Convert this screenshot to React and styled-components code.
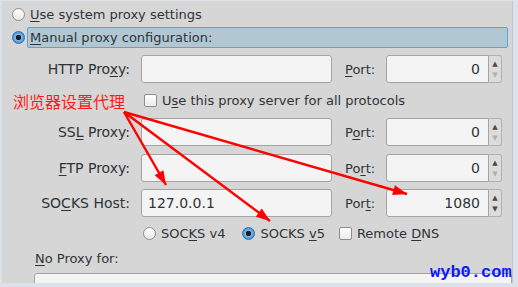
import styled, { createGlobalStyle } from "styled-components";

const Global = createGlobalStyle`
	body {
		margin: 0;
		background: #dde2ea;
		font-family: "DejaVu Sans", "Noto Sans CJK SC", sans-serif;
		font-size: 13px;
		color: #2e3436;
	}
`;

const Page = styled.div`
	position: relative;
	width: 518px;
	height: 287px;
	overflow: hidden;
`;

const Panel = styled.div`
	margin: 1px 5px 0 2px;
	height: 282px;
	background: #d6d6d6;
	border-right: 1px solid #c4c4c4;
	padding: 4px 0 0 0;
	box-sizing: border-box;
	overflow: hidden;
`;

const RadioRow = styled.div`
	display: flex;
	align-items: center;
	gap: 5px;
	height: ${(p) => p.h || 22}px;
	margin-left: 10px;
	margin-bottom: ${(p) => p.mb || 0}px;
`;

const Highlight = styled.div`
	display: flex;
	align-items: center;
	height: 19px;
	width: 477px;
	margin-left: -3px;
	padding-left: 2px;
	background: #b3c7d3;
	border: 1px solid #57a3da;
	border-radius: 2px;
`;

const Radio = styled.span`
	display: inline-block;
	flex: none;
	width: 13px;
	height: 13px;
	border-radius: 50%;
	box-sizing: border-box;
	border: 1px solid ${(p) => (p.on ? "#2c6fae" : "#8d8d8d")};
	background: ${(p) =>
		p.on
			? "radial-gradient(circle, #1b1b1b 0 2.5px, #7cb6e8 3px, #3e8fd6 6px)"
			: "linear-gradient(#ffffff, #e8e8e8)"};
`;

const Check = styled.span`
	display: inline-block;
	flex: none;
	width: 13px;
	height: 13px;
	box-sizing: border-box;
	border: 1px solid #8d8d8d;
	border-radius: 2px;
	background: linear-gradient(#ffffff, #ececec);
`;

const U = styled.span`
	text-decoration: underline;
	text-underline-offset: 2px;
`;

const Grid = styled.div`
	display: grid;
	grid-template-columns: 122px 191px 32px 116px;
	column-gap: 11px;
	margin-left: 6px;
`;

const Label = styled.div`
	display: flex;
	align-items: center;
	justify-content: ${(p) => (p.left ? "flex-start" : "flex-end")};
	height: 28px;
	margin: ${(p) => p.m || "0"};
	padding-left: ${(p) => (p.left ? 2 : 0)}px;
	font-size: ${(p) => (p.left ? 13 : 14)}px;
	white-space: pre;
`;

const Input = styled.div`
	display: flex;
	align-items: center;
	height: 28px;
	box-sizing: border-box;
	padding: 0 6px;
	background: #f4f4f4;
	border: 1px solid #a4a4a4;
	border-radius: 3px;
	font-size: 14px;
	margin: ${(p) => p.m || "0"};
`;

const Spin = styled.div`
	display: flex;
	height: 28px;
	margin: ${(p) => p.m || "0"};
	width: 116px;
`;

const SpinField = styled.div`
	flex: 1;
	display: flex;
	align-items: center;
	justify-content: flex-end;
	padding-right: 8px;
	box-sizing: border-box;
	background: #f4f4f4;
	border: 1px solid #a4a4a4;
	border-radius: 3px 0 0 3px;
	font-size: 14px;
`;

const SpinButtons = styled.div`
	width: 12px;
	display: flex;
	flex-direction: column;
	align-items: center;
	justify-content: center;
	gap: 3px;
	background: #dcdcdc;
	border: 1px solid #b0b0b0;
	border-left: none;
	border-radius: 0 3px 3px 0;
	font-size: 7px;
	line-height: 8px;
`;

const Arrow = styled.span`
	color: ${(p) => (p.dim ? "#b0b0b0" : "#4a4a4a")};
`;

const OptionsRow = styled.div`
	display: flex;
	align-items: center;
	height: ${(p) => p.h}px;
	margin-left: ${(p) => p.ml}px;
	gap: 5px;
`;

const Option = styled.span`
	display: inline-flex;
	align-items: center;
	gap: 5px;
	margin-right: ${(p) => p.mr || 0}px;
`;

const NoProxy = styled.div`
	margin: 1px 0 0 33px;
	height: 18px;
	line-height: 18px;
`;

const TextArea = styled.div`
	margin: 5px 0 0 32px;
	width: 476px;
	height: 30px;
	background: #f4f4f4;
	border: 1px solid #a4a4a4;
	border-radius: 3px;
`;

const Note = styled.div`
	position: absolute;
	left: 13px;
	top: 91px;
	color: #ff1a1a;
	font-family: "Noto Sans CJK SC", sans-serif;
	font-size: 16px;
	line-height: 20px;
`;

const Mark = styled.div`
	position: absolute;
	left: 430px;
	top: 263px;
	color: #0a1aff;
	font-family: "Liberation Mono", monospace;
	font-weight: bold;
	font-size: 17px;
	line-height: 20px;
`;

const Overlay = styled.svg`
	position: absolute;
	left: 0;
	top: 0;
	pointer-events: none;
`;

function head(x1, y1, x2, y2, len = 14, w = 5) {
	const dx = x2 - x1;
	const dy = y2 - y1;
	const d = Math.hypot(dx, dy);
	const ux = dx / d;
	const uy = dy / d;
	const bx = x2 - ux * len;
	const by = y2 - uy * len;
	return `${x2},${y2} ${bx - uy * w},${by + ux * w} ${bx + uy * w},${by - ux * w}`;
}

const arrows = [
	[124, 112, 166, 185],
	[124, 112, 270, 221],
	[124, 112, 407, 194],
];

function PortBox({ value, m, dimDown }) {
	return (
		<Spin m={m}>
			<SpinField>{value}</SpinField>
			<SpinButtons>
				<Arrow>▲</Arrow>
				<Arrow dim={dimDown}>▼</Arrow>
			</SpinButtons>
		</Spin>
	);
}

function ProxyRow({ label, port, value, portValue, m, dimDown }) {
	return (
		<>
			<Label m={m}>
				<span>{label}</span>
			</Label>
			<Input m={m}>{value}</Input>
			<Label left m={m}>
				<span>{port}</span>
			</Label>
			<PortBox value={portValue} m={m} dimDown={dimDown} />
		</>
	);
}

export default function App() {
	return (
		<Page>
			<Global />
			<Panel>
				<RadioRow h={18} mb={3}>
					<Radio />
					<span>
						<U>U</U>se system proxy settings
					</span>
				</RadioRow>
				<RadioRow h={22} mb={7}>
					<Radio on />
					<Highlight>
						<span>
							<U>M</U>anual proxy configuration:
						</span>
					</Highlight>
				</RadioRow>
				<Grid>
					<ProxyRow
						label={<>HTTP Pro<U>x</U>y:</>}
						port={<><U>P</U>ort:</>}
						portValue="0"
						dimDown
					/>
				</Grid>
				<OptionsRow h={35} ml={142}>
					<Check />
					<span>
						U<U>s</U>e this proxy server for all protocols
					</span>
				</OptionsRow>
				<Grid>
					<ProxyRow
						label={<>SS<U>L</U> Proxy:</>}
						port={<>P<U>o</U>rt:</>}
						portValue="0"
						dimDown
					/>
					<ProxyRow
						label={<><U>F</U>TP Proxy:</>}
						port={<>Po<U>r</U>t:</>}
						portValue="0"
						dimDown
						m="8px 0 0"
					/>
					<ProxyRow
						label={<>SO<U>C</U>KS Host:</>}
						port={<>Por<U>t</U>:</>}
						value="127.0.0.1"
						portValue="1080"
						m="7px 0 0"
					/>
				</Grid>
				<OptionsRow h={32} ml={141}>
					<Option mr={12}>
						<Radio />
						<span>
							SOC<U>K</U>S v4
						</span>
					</Option>
					<Option mr={9}>
						<Radio on />
						<span>
							SOCKS <U>v</U>5
						</span>
					</Option>
					<Option>
						<Check />
						<span>
							Remote <U>D</U>NS
						</span>
					</Option>
				</OptionsRow>
				<NoProxy>
					<U>N</U>o Proxy for:
				</NoProxy>
				<TextArea />
			</Panel>
			<Note>浏览器设置代理</Note>
			<Mark>wyb0.com</Mark>
			<Overlay width="518" height="287" viewBox="0 0 518 287">
				{arrows.map(([x1, y1, x2, y2], i) => (
					<g key={i} fill="#ff0000" stroke="#ff0000">
						<line x1={x1} y1={y1} x2={x2} y2={y2} strokeWidth="2.4" />
						<polygon points={head(x1, y1, x2, y2)} stroke="none" />
					</g>
				))}
			</Overlay>
		</Page>
	);
}
